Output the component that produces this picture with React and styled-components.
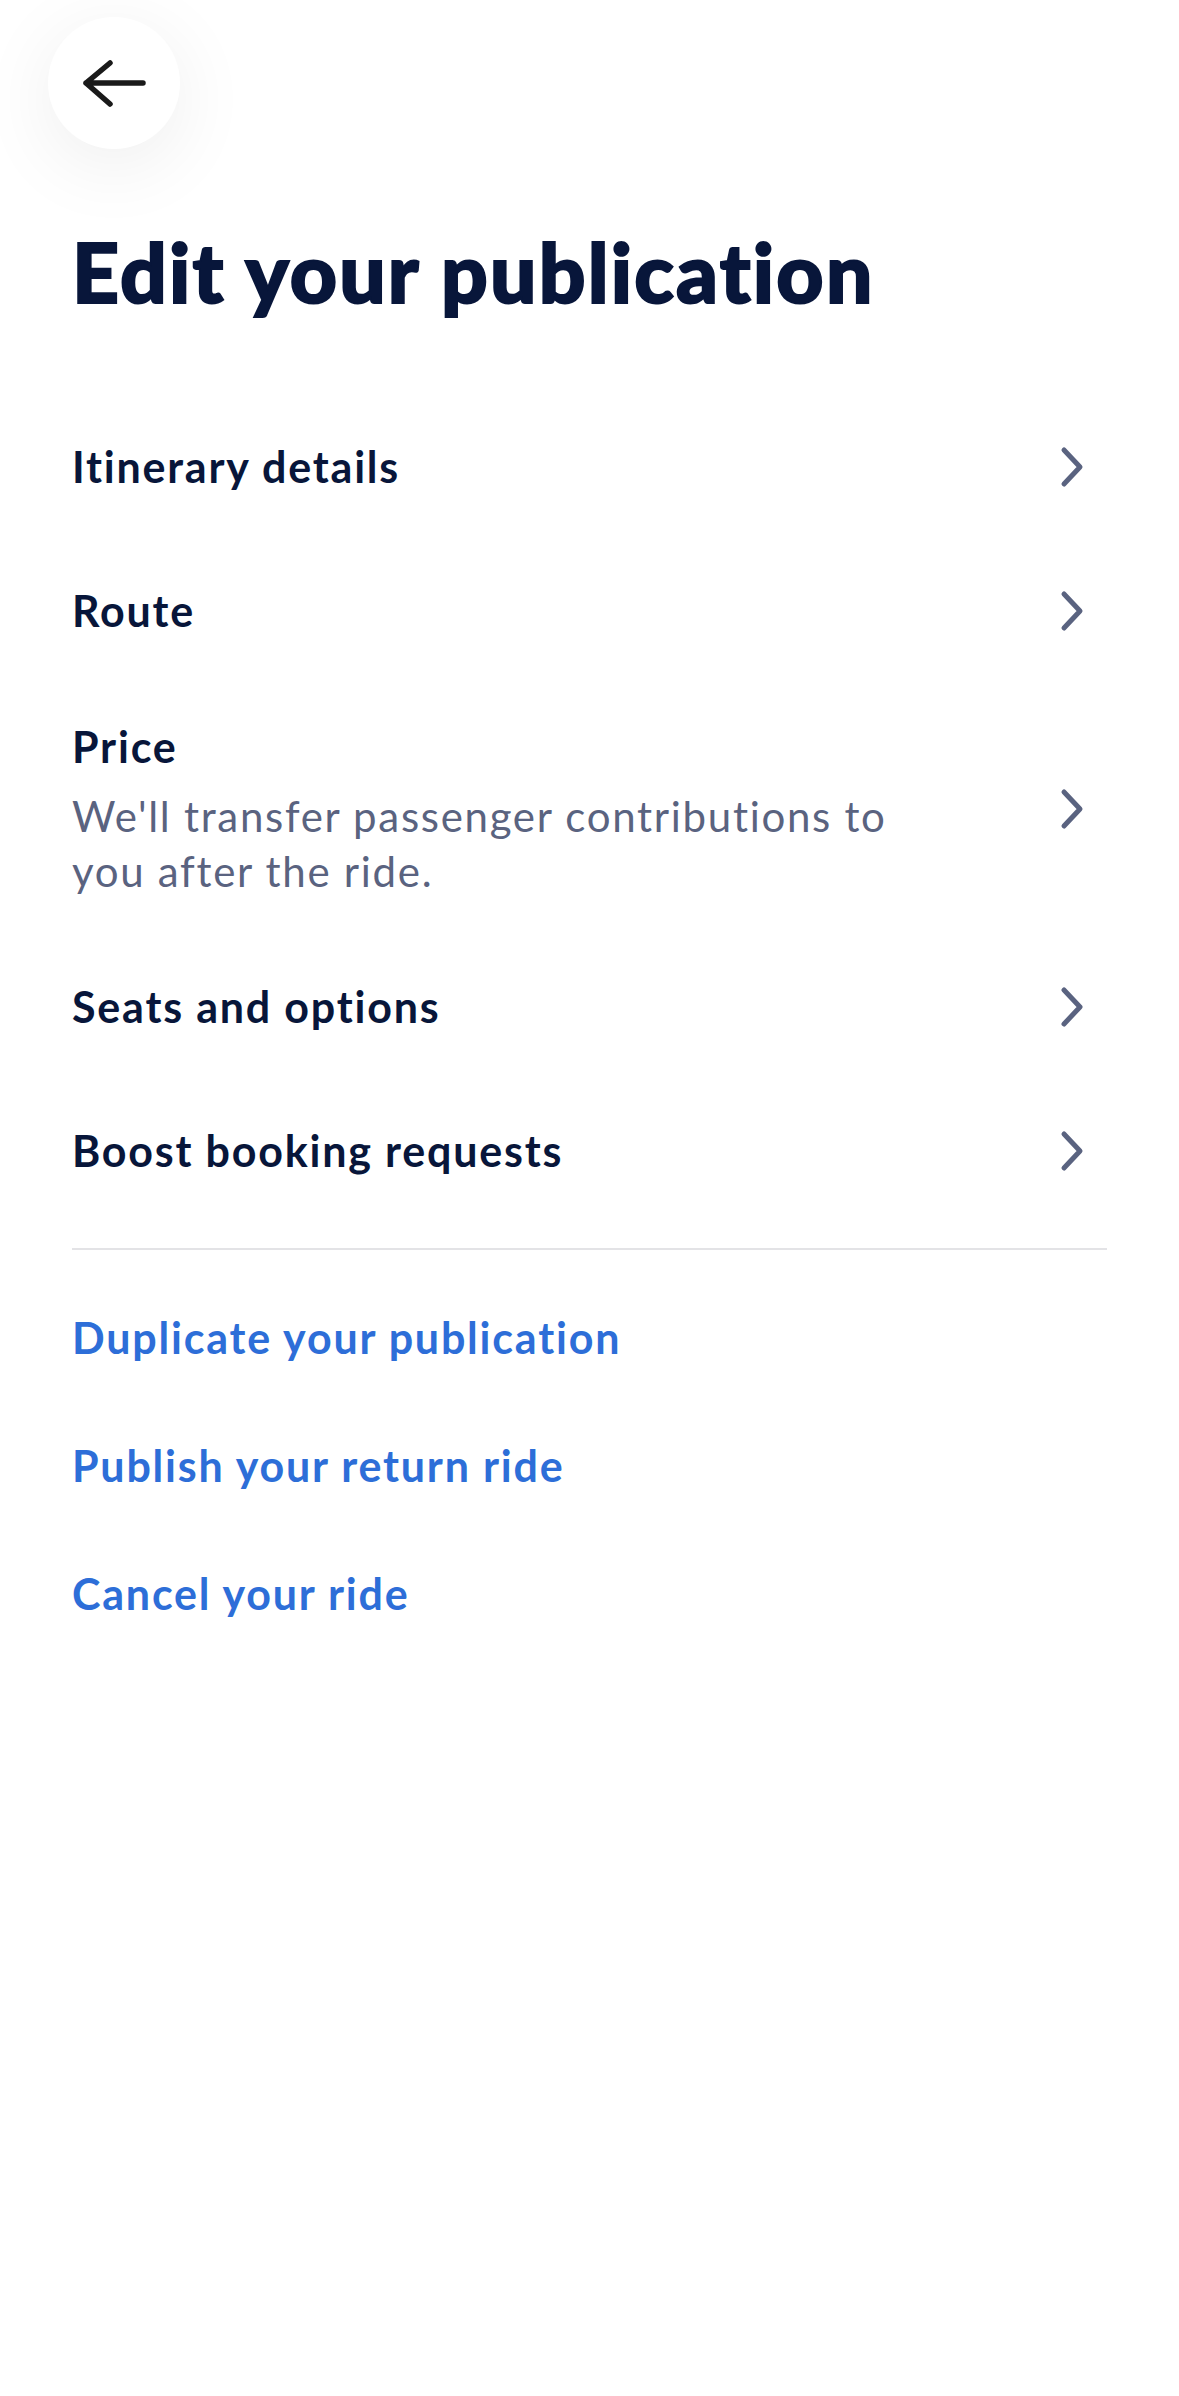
import React from 'react'
import styled, { createGlobalStyle } from 'styled-components'

const GlobalStyle = createGlobalStyle`
  body {
    margin: 0;
    background: #ffffff;
    font-family: Lato, "Open Sans", sans-serif;
    -webkit-font-smoothing: antialiased;
  }
`

const items = [
  { label: 'Itinerary details' },
  { label: 'Route' },
  { label: 'Price', note: "We'll transfer passenger contributions to you after the ride." },
  { label: 'Seats and options' },
  { label: 'Boost booking requests' },
]

const links = ['Duplicate your publication', 'Publish your return ride', 'Cancel your ride']

const BackArrow = () => (
  <svg width="64" height="48" viewBox="0 0 64 48" fill="none">
    <path
      d="M61 24H4M28 4L4 24l24 21"
      stroke="#1a1a1a"
      strokeWidth="5.5"
      strokeLinecap="round"
      strokeLinejoin="round"
    />
  </svg>
)

const Chevron = () => (
  <svg width="48" height="48" viewBox="0 0 48 48" fill="none">
    <path d="M5 7l16 17L5 41" stroke="#5a6380" strokeWidth="5" strokeLinecap="round" strokeLinejoin="round" />
  </svg>
)

const App = () => {
  return (
    <Page>
      <GlobalStyle />
      <BackButton aria-label="Back">
        <BackArrow />
      </BackButton>
      <Title>Edit your publication</Title>

      <List>
        {items.map((item) => (
          <Row key={item.label}>
            <RowText>
              <Label>{item.label}</Label>
              {item.note && <Note>{item.note}</Note>}
            </RowText>
            <Chevron />
          </Row>
        ))}
      </List>

      <Divider />

      <Links>
        {links.map((l) => (
          <LinkItem key={l}>{l}</LinkItem>
        ))}
      </Links>
    </Page>
  )
}

const Page = styled.main`
  min-height: 2396px;
  box-sizing: border-box;
  padding: 17px 72px 0 72px;
  display: flex;
  flex-direction: column;
`

const BackButton = styled.button`
  width: 132px;
  height: 132px;
  margin-left: -24px;
  border: none;
  border-radius: 50%;
  background: #ffffff;
  box-shadow: 0 16px 80px rgba(0, 0, 0, 0.07);
  display: flex;
  align-items: center;
  justify-content: center;
  padding: 0;
  cursor: pointer;
`

const Title = styled.h1`
  margin: 77px 0 79px 0;
  font-size: 82px;
  line-height: 90px;
  font-weight: 900;
  color: #08163a;
  letter-spacing: 2.2px;
  -webkit-text-stroke: 2px #08163a;
`

const List = styled.div`
  display: flex;
  flex-direction: column;
`

const Row = styled.div`
  min-height: 144px;
  box-sizing: border-box;
  padding: 36px 0;
  display: flex;
  align-items: center;
  justify-content: space-between;
  cursor: pointer;
`

const RowText = styled.div`
  display: flex;
  flex-direction: column;
  gap: 14px;
  max-width: 860px;
`

const Label = styled.span`
  font-size: 43px;
  line-height: 56px;
  font-weight: 700;
  letter-spacing: 1.8px;
  color: #08163a;
`

const Note = styled.span`
  font-size: 42px;
  line-height: 55px;
  font-weight: 400;
  letter-spacing: 1.7px;
  color: #5a6380;
`

const Divider = styled.hr`
  margin: 25px 0 24px 0;
  border: none;
  height: 2px;
  background: #e3e3e6;
`

const Links = styled.div`
  display: flex;
  flex-direction: column;
`

const LinkItem = styled.a`
  padding: 36px 0;
  font-size: 43px;
  line-height: 56px;
  font-weight: 700;
  letter-spacing: 1.8px;
  color: #2d6ed8;
  cursor: pointer;
`

export default App
